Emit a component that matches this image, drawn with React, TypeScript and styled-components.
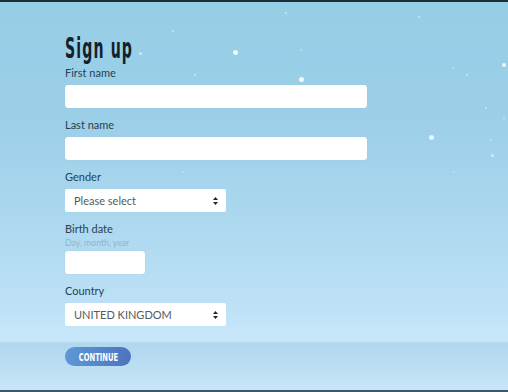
import React from "react";
import styled, { createGlobalStyle } from "styled-components";

const GlobalStyle = createGlobalStyle`
  html, body { margin: 0; padding: 0; }
  body { font-family: Lato, "Open Sans", sans-serif; }
  * { box-sizing: border-box; }
`;

const Page = styled.div`
  position: relative;
  width: 508px;
  height: 392px;
  overflow: hidden;
  border-top: 2px solid #1d2d38;
  border-bottom: 2px solid #3b5866;
  background:
    linear-gradient(to bottom,
      #96cee6 0px,
      #9ccfe8 120px,
      #acd8ef 220px,
      #bde0f6 300px,
      #c9e7fa 339px,
      #b0d7ee 341px,
      #b6dbf1 355px,
      #c6e5f8 386px);
`;

const Snow = styled.span<{ $size: number; $op: number }>`
  position: absolute;
  width: ${(p) => p.$size}px;
  height: ${(p) => p.$size}px;
  border-radius: 50%;
  background: #ffffff;
  opacity: ${(p) => p.$op};
`;

const Form = styled.form`
  display: flex;
  flex-direction: column;
  align-items: flex-start;
  padding: 29px 0 0 65px;
`;

const Heading = styled.h1`
  margin: 0;
  font-family: "DejaVu Sans Condensed", "DejaVu Sans", sans-serif;
  font-weight: 700;
  font-size: 28px;
  line-height: 34px;
  color: #14202a;
  letter-spacing: 2px;
  transform: translateY(1px) scaleX(0.56);
  transform-origin: left center;
  white-space: nowrap;
`;

const Field = styled.div`
  display: flex;
  flex-direction: column;
  margin-bottom: 9px;
`;

const Label = styled.label`
  font-size: 11px;
  line-height: 16px;
  color: #284252;
  margin-bottom: 4px;
`;

const Hint = styled.span`
  font-size: 8.7px;
  line-height: 12px;
  color: #8db6ca;
  margin-top: -4px;
  margin-bottom: 2px;
`;

const Input = styled.div<{ $w: number }>`
  width: ${(p) => p.$w}px;
  height: 23px;
  background: #ffffff;
  border-radius: 3px;
  box-shadow: 0 0 1px rgba(120, 160, 180, 0.5);
`;

const Select = styled.div`
  width: 161px;
  height: 23px;
  background: #ffffff;
  border-radius: 2px;
  display: flex;
  align-items: center;
  justify-content: space-between;
  padding: 0 8px 0 9px;
  font-size: 11px;
  color: #555a5e;
`;

const Button = styled.button`
  margin-top: 12px;
  width: 66px;
  height: 19px;
  border: none;
  border-radius: 10px;
  background: linear-gradient(to right, #5f98d6, #4c74bd);
  padding: 0;
  display: flex;
  align-items: center;
  justify-content: center;
`;

const ButtonText = styled.span`
  color: #ffffff;
  font-family: "DejaVu Sans Condensed", "DejaVu Sans", sans-serif;
  font-weight: 700;
  font-size: 10.5px;
  line-height: 12px;
  display: inline-block;
  transform: scaleX(0.72);
  white-space: nowrap;
`;

const Arrows = () => (
  <svg width="5" height="8" viewBox="0 0 5 8">
    <path d="M2.5 0 L5 3 L0 3 Z" fill="#222" />
    <path d="M0 5 L5 5 L2.5 8 Z" fill="#222" />
  </svg>
);

const flakes: [number, number, number, number][] = [
  [235, 52, 5, 0.85],
  [301, 79, 5, 0.85],
  [431, 137, 5, 0.8],
  [504, 65, 4, 0.8],
  [140, 53, 3, 0.5],
  [173, 31, 2, 0.5],
  [195, 75, 2, 0.45],
  [286, 13, 2, 0.5],
  [419, 17, 2, 0.5],
  [301, 50, 2, 0.4],
  [453, 68, 2, 0.4],
  [467, 75, 2, 0.45],
  [486, 108, 2, 0.45],
  [504, 118, 2, 0.4],
  [492, 155, 3, 0.55],
  [491, 140, 2, 0.4],
  [454, 172, 2, 0.35],
  [183, 172, 2, 0.3],
];

export default function App() {
  return (
    <>
      <GlobalStyle />
      <Page>
        {flakes.map(([x, y, s, o], i) => (
          <Snow
            key={i}
            $size={s}
            $op={o}
            style={{ left: x - s / 2, top: y - s / 2 - 2 }}
          />
        ))}
        <Form onSubmit={(e) => e.preventDefault()}>
          <Heading>Sign up</Heading>
          <Field>
            <Label>First name</Label>
            <Input $w={302} />
          </Field>
          <Field>
            <Label>Last name</Label>
            <Input $w={302} />
          </Field>
          <Field>
            <Label>Gender</Label>
            <Select>
              <span>Please select</span>
              <Arrows />
            </Select>
          </Field>
          <Field>
            <Label>Birth date</Label>
            <Hint>Day, month, year</Hint>
            <Input $w={80} />
          </Field>
          <Field>
            <Label>Country</Label>
            <Select>
              <span>UNITED KINGDOM</span>
              <Arrows />
            </Select>
          </Field>
          <Button type="button">
            <ButtonText>CONTINUE</ButtonText>
          </Button>
        </Form>
      </Page>
    </>
  );
}
